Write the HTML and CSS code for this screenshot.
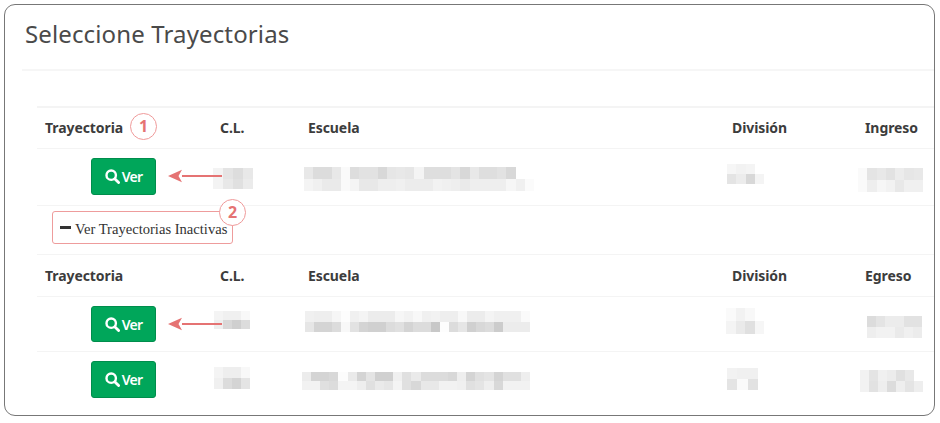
FILE: index.html
```html
<!DOCTYPE html>
<html lang="es">
<head>
<meta charset="utf-8">
<title>Seleccione Trayectorias</title>
<link rel="stylesheet" href="styles.css">
</head>
<body>
<svg class="defs" width="0" height="0" aria-hidden="true">
  <symbol id="lupa" viewBox="0 0 15 15"><circle cx="6.2" cy="6.2" r="4.7" fill="none" stroke="#fff" stroke-width="2.4"/><path d="M9.7 9.7 13.6 13.6" stroke="#fff" stroke-width="2.8" stroke-linecap="round"/></symbol>
  <symbol id="flecha" viewBox="0 0 56 14"><path d="M15 7H55" stroke="#e57373" stroke-width="2"/><path d="M1 7 15 .8 11.5 7 15 13.2Z" fill="#e57373"/></symbol>
</svg>
<main class="frame">
  <h1 class="title">Seleccione Trayectorias</h1>
  <table class="tray">
    <colgroup><col class="c1"><col class="c2"><col class="c3"><col class="c4"><col class="c5"></colgroup>
    <tr class="head first"><th>Trayectoria</th><th>C.L.</th><th>Escuela</th><th>División</th><th>Ingreso</th></tr>
    <tr class="r1">
      <td class="act"><a class="btn"><svg class="ico"><use href="#lupa"/></svg>Ver</a></td>
      <td class="blur"><svg class="m" viewBox="212 149 88 56"><svg x="213" y="168" width="40" height="21" viewBox="0 0 4 2" preserveAspectRatio="none"><rect x="0" y="0" fill="#f3f3f3"/><rect x="1" y="0" fill="#e4e4e4"/><rect x="2" y="0" fill="#ddd"/><rect x="3" y="0" fill="#e8e8e8"/><rect x="0" y="1" fill="#f3f3f3"/><rect x="1" y="1" fill="#e8e8e8"/><rect x="2" y="1" fill="#e0e0e0"/><rect x="3" y="1" fill="#ebebeb"/></svg></svg></td>
      <td class="blur"><svg class="m" viewBox="300 149 424 56"><svg x="304" y="167" width="230" height="24" viewBox="0 0 25 2" preserveAspectRatio="none"><rect x="0" y="0" fill="#e8e8e8"/><rect x="1" y="0" fill="#dcdcdc"/><rect x="2" y="0" fill="#dcdcdc"/><rect x="3" y="0" fill="#e8e8e8"/><rect x="4" y="0" fill="#fafafa"/><rect x="5" y="0" fill="#ddd"/><rect x="6" y="0" fill="#e2e2e2"/><rect x="7" y="0" fill="#e2e2e2"/><rect x="8" y="0" fill="#d8d8d8"/><rect x="9" y="0" fill="#e6e6e6"/><rect x="10" y="0" fill="#e8e8e8"/><rect x="11" y="0" fill="#e6e6e6"/><rect x="12" y="0" fill="#f4f4f4"/><rect x="13" y="0" fill="#dedede"/><rect x="14" y="0" fill="#dedede"/><rect x="15" y="0" fill="#dedede"/><rect x="16" y="0" fill="#e4e4e4"/><rect x="17" y="0" fill="#d8d8d8"/><rect x="18" y="0" fill="#e8e8e8"/><rect x="19" y="0" fill="#dedede"/><rect x="20" y="0" fill="#dedede"/><rect x="21" y="0" fill="#e2e2e2"/><rect x="22" y="0" fill="#d8d8d8"/><rect x="0" y="1" fill="#f4f4f4"/><rect x="1" y="1" fill="#f0f0f0"/><rect x="2" y="1" fill="#eaeaea"/><rect x="3" y="1" fill="#eaeaea"/><rect x="4" y="1" fill="#fafafa"/><rect x="5" y="1" fill="#f4f4f4"/><rect x="6" y="1" fill="#e8e8e8"/><rect x="7" y="1" fill="#e8e8e8"/><rect x="8" y="1" fill="#eee"/><rect x="9" y="1" fill="#eee"/><rect x="10" y="1" fill="#f0f0f0"/><rect x="11" y="1" fill="#ececec"/><rect x="12" y="1" fill="#ececec"/><rect x="13" y="1" fill="#ececec"/><rect x="14" y="1" fill="#f2f2f2"/><rect x="15" y="1" fill="#f0f0f0"/><rect x="16" y="1" fill="#eee"/><rect x="17" y="1" fill="#eaeaea"/><rect x="18" y="1" fill="#eee"/><rect x="19" y="1" fill="#eee"/><rect x="20" y="1" fill="#eee"/><rect x="21" y="1" fill="#eee"/><rect x="22" y="1" fill="#f6f6f6"/><rect x="23" y="1" fill="#f0f0f0"/><rect x="24" y="1" fill="#fbfbfb"/></svg></svg></td>
      <td class="blur"><svg class="m" viewBox="724 149 133 56"><svg x="727" y="164" width="37" height="20" viewBox="0 0 4 2" preserveAspectRatio="none"><rect x="0" y="0" fill="#f6f6f6"/><rect x="1" y="0" fill="#f2f2f2"/><rect x="2" y="0" fill="#f4f4f4"/><rect x="0" y="1" fill="#e4e4e4"/><rect x="1" y="1" fill="#ececec"/><rect x="2" y="1" fill="#d8d8d8"/><rect x="3" y="1" fill="#f4f4f4"/></svg></svg></td>
      <td class="blur"><svg class="m" viewBox="857 149 77 56"><svg x="858" y="168" width="65" height="24" viewBox="0 0 7 2" preserveAspectRatio="none"><rect x="0" y="0" fill="#fafafa"/><rect x="1" y="0" fill="#e4e4e4"/><rect x="2" y="0" fill="#e8e8e8"/><rect x="3" y="0" fill="#e2e2e2"/><rect x="4" y="0" fill="#ececec"/><rect x="5" y="0" fill="#e6e6e6"/><rect x="6" y="0" fill="#e8e8e8"/><rect x="0" y="1" fill="#fafafa"/><rect x="1" y="1" fill="#eee"/><rect x="2" y="1" fill="#f6f6f6"/><rect x="3" y="1" fill="#f2f2f2"/><rect x="4" y="1" fill="#e8e8e8"/><rect x="5" y="1" fill="#f0f0f0"/><rect x="6" y="1" fill="#f0f0f0"/></svg></svg></td>
    </tr>
    <tr>
      <td class="toggle-cell" colspan="5"><span class="toggle"><i class="minus"></i>Ver Trayectorias Inactivas</span></td>
    </tr>
    <tr class="head"><th>Trayectoria</th><th>C.L.</th><th>Escuela</th><th>División</th><th>Egreso</th></tr>
    <tr class="r2">
      <td class="act"><a class="btn"><svg class="ico"><use href="#lupa"/></svg>Ver</a></td>
      <td class="blur"><svg class="m" viewBox="212 297 88 54"><svg x="214" y="311" width="36" height="18" viewBox="0 0 4 2" preserveAspectRatio="none"><rect x="0" y="0" fill="#f4f4f4"/><rect x="1" y="0" fill="#f0f0f0"/><rect x="2" y="0" fill="#f0f0f0"/><rect x="3" y="0" fill="#f8f8f8"/><rect x="0" y="1" fill="#eee"/><rect x="1" y="1" fill="#d8d8d8"/><rect x="2" y="1" fill="#cfcfcf"/><rect x="3" y="1" fill="#dcdcdc"/></svg></svg></td>
      <td class="blur"><svg class="m" viewBox="300 297 424 54"><svg x="305" y="311" width="225" height="21" viewBox="0 0 25 2" preserveAspectRatio="none"><rect x="0" y="0" fill="#f0f0f0"/><rect x="1" y="0" fill="#eee"/><rect x="2" y="0" fill="#eee"/><rect x="3" y="0" fill="#f6f6f6"/><rect x="4" y="0" fill="#fdfdfd"/><rect x="5" y="0" fill="#f0f0f0"/><rect x="6" y="0" fill="#f4f4f4"/><rect x="7" y="0" fill="#ececec"/><rect x="8" y="0" fill="#ececec"/><rect x="9" y="0" fill="#ececec"/><rect x="10" y="0" fill="#f6f6f6"/><rect x="11" y="0" fill="#f2f2f2"/><rect x="12" y="0" fill="#f8f8f8"/><rect x="13" y="0" fill="#f0f0f0"/><rect x="14" y="0" fill="#f2f2f2"/><rect x="15" y="0" fill="#eee"/><rect x="16" y="0" fill="#eee"/><rect x="17" y="0" fill="#f8f8f8"/><rect x="18" y="0" fill="#ececec"/><rect x="19" y="0" fill="#ececec"/><rect x="20" y="0" fill="#f4f4f4"/><rect x="21" y="0" fill="#f0f0f0"/><rect x="22" y="0" fill="#f0f0f0"/><rect x="23" y="0" fill="#f0f0f0"/><rect x="24" y="0" fill="#fafafa"/><rect x="0" y="1" fill="#e6e6e6"/><rect x="1" y="1" fill="#d4d4d4"/><rect x="2" y="1" fill="#d4d4d4"/><rect x="3" y="1" fill="#dcdcdc"/><rect x="4" y="1" fill="#f8f8f8"/><rect x="5" y="1" fill="#e2e2e2"/><rect x="6" y="1" fill="#d4d4d4"/><rect x="7" y="1" fill="#d0d0d0"/><rect x="8" y="1" fill="#d0d0d0"/><rect x="9" y="1" fill="#dcdcdc"/><rect x="10" y="1" fill="#e0e0e0"/><rect x="11" y="1" fill="#d4d4d4"/><rect x="12" y="1" fill="#dcdcdc"/><rect x="13" y="1" fill="#dcdcdc"/><rect x="14" y="1" fill="#c8c8c8"/><rect x="15" y="1" fill="#fdfdfd"/><rect x="16" y="1" fill="#dcdcdc"/><rect x="17" y="1" fill="#e6e6e6"/><rect x="18" y="1" fill="#d0d0d0"/><rect x="19" y="1" fill="#d8d8d8"/><rect x="20" y="1" fill="#dcdcdc"/><rect x="21" y="1" fill="#ccc"/><rect x="22" y="1" fill="#ececec"/><rect x="23" y="1" fill="#ececec"/><rect x="24" y="1" fill="#ececec"/></svg></svg></td>
      <td class="blur"><svg class="m" viewBox="724 297 133 54"><svg x="726" y="308" width="38" height="26" viewBox="0 0 4 2" preserveAspectRatio="none"><rect x="0" y="0" fill="#fafafa"/><rect x="1" y="0" fill="#f2f2f2"/><rect x="2" y="0" fill="#f8f8f8"/><rect x="0" y="1" fill="#f4f4f4"/><rect x="1" y="1" fill="#eaeaea"/><rect x="2" y="1" fill="#e0e0e0"/><rect x="3" y="1" fill="#f6f6f6"/></svg></svg></td>
      <td class="blur"><svg class="m" viewBox="857 297 77 54"><svg x="867" y="316" width="55" height="22" viewBox="0 0 6 2" preserveAspectRatio="none"><rect x="0" y="0" fill="#dcdcdc"/><rect x="1" y="0" fill="#e4e4e4"/><rect x="2" y="0" fill="#ececec"/><rect x="3" y="0" fill="#ececec"/><rect x="4" y="0" fill="#e2e2e2"/><rect x="5" y="0" fill="#e2e2e2"/><rect x="0" y="1" fill="#eee"/><rect x="1" y="1" fill="#f2f2f2"/><rect x="2" y="1" fill="#f2f2f2"/><rect x="3" y="1" fill="#eaeaea"/><rect x="4" y="1" fill="#f0f0f0"/><rect x="5" y="1" fill="#ececec"/></svg></svg></td>
    </tr>
    <tr class="r3">
      <td class="act"><a class="btn"><svg class="ico"><use href="#lupa"/></svg>Ver</a></td>
      <td class="blur"><svg class="m" viewBox="212 352 88 55"><svg x="214" y="367" width="36" height="22" viewBox="0 0 4 2" preserveAspectRatio="none"><rect x="0" y="0" fill="#f4f4f4"/><rect x="1" y="0" fill="#eee"/><rect x="2" y="0" fill="#eee"/><rect x="3" y="0" fill="#f8f8f8"/><rect x="0" y="1" fill="#f0f0f0"/><rect x="1" y="1" fill="#dcdcdc"/><rect x="2" y="1" fill="#d4d4d4"/><rect x="3" y="1" fill="#e4e4e4"/></svg></svg></td>
      <td class="blur"><svg class="m" viewBox="300 352 424 55"><svg x="302" y="372" width="228" height="18" viewBox="0 0 25 2" preserveAspectRatio="none"><rect x="0" y="0" fill="#ececec"/><rect x="1" y="0" fill="#d4d4d4"/><rect x="2" y="0" fill="#d4d4d4"/><rect x="3" y="0" fill="#d8d8d8"/><rect x="4" y="0" fill="#fcfcfc"/><rect x="5" y="0" fill="#eaeaea"/><rect x="6" y="0" fill="#d4d4d4"/><rect x="7" y="0" fill="#e4e4e4"/><rect x="8" y="0" fill="#d0d0d0"/><rect x="9" y="0" fill="#d0d0d0"/><rect x="10" y="0" fill="#f0f0f0"/><rect x="11" y="0" fill="#e0e0e0"/><rect x="12" y="0" fill="#eaeaea"/><rect x="13" y="0" fill="#dcdcdc"/><rect x="14" y="0" fill="#dcdcdc"/><rect x="15" y="0" fill="#dcdcdc"/><rect x="16" y="0" fill="#d8d8d8"/><rect x="17" y="0" fill="#eee"/><rect x="18" y="0" fill="#d4d4d4"/><rect x="19" y="0" fill="#e0e0e0"/><rect x="20" y="0" fill="#e4e4e4"/><rect x="21" y="0" fill="#d4d4d4"/><rect x="22" y="0" fill="#e0e0e0"/><rect x="23" y="0" fill="#e0e0e0"/><rect x="24" y="0" fill="#eee"/><rect x="0" y="1" fill="#f2f2f2"/><rect x="1" y="1" fill="#f2f2f2"/><rect x="2" y="1" fill="#e0e0e0"/><rect x="3" y="1" fill="#dcdcdc"/><rect x="4" y="1" fill="#f4f4f4"/><rect x="5" y="1" fill="#f4f4f4"/><rect x="6" y="1" fill="#eee"/><rect x="7" y="1" fill="#e0e0e0"/><rect x="8" y="1" fill="#eaeaea"/><rect x="9" y="1" fill="#e6e6e6"/><rect x="10" y="1" fill="#f4f4f4"/><rect x="11" y="1" fill="#e0e0e0"/><rect x="12" y="1" fill="#d8d8d8"/><rect x="13" y="1" fill="#e8e8e8"/><rect x="14" y="1" fill="#e8e8e8"/><rect x="15" y="1" fill="#f2f2f2"/><rect x="16" y="1" fill="#f2f2f2"/><rect x="17" y="1" fill="#f0f0f0"/><rect x="18" y="1" fill="#e0e0e0"/><rect x="19" y="1" fill="#e4e4e4"/><rect x="20" y="1" fill="#eee"/><rect x="21" y="1" fill="#d8d8d8"/><rect x="22" y="1" fill="#f2f2f2"/><rect x="23" y="1" fill="#f2f2f2"/><rect x="24" y="1" fill="#f2f2f2"/></svg></svg></td>
      <td class="blur"><svg class="m" viewBox="724 352 133 55"><svg x="727" y="368" width="31" height="22" viewBox="0 0 3 2" preserveAspectRatio="none"><rect x="0" y="0" fill="#f2f2f2"/><rect x="1" y="0" fill="#f0f0f0"/><rect x="2" y="0" fill="#f0f0f0"/><rect x="0" y="1" fill="#e4e4e4"/><rect x="1" y="1" fill="#fafafa"/><rect x="2" y="1" fill="#e2e2e2"/></svg></svg></td>
      <td class="blur"><svg class="m" viewBox="857 352 77 55"><svg x="860" y="370" width="63" height="22" viewBox="0 0 7 2" preserveAspectRatio="none"><rect x="0" y="0" fill="#f2f2f2"/><rect x="1" y="0" fill="#e4e4e4"/><rect x="2" y="0" fill="#f0f0f0"/><rect x="3" y="0" fill="#ececec"/><rect x="4" y="0" fill="#e0e0e0"/><rect x="5" y="0" fill="#e8e8e8"/><rect x="0" y="1" fill="#f2f2f2"/><rect x="1" y="1" fill="#e2e2e2"/><rect x="2" y="1" fill="#eee"/><rect x="3" y="1" fill="#dcdcdc"/><rect x="4" y="1" fill="#eee"/><rect x="5" y="1" fill="#e4e4e4"/><rect x="6" y="1" fill="#eee"/></svg></svg></td>
    </tr>
  </table>
  <span class="badge b1">1</span>
  <span class="badge b2">2</span>
  <svg class="arrow a1"><use href="#flecha"/></svg>
  <svg class="arrow a2"><use href="#flecha"/></svg>
</main>
</body>
</html>
```
FILE: styles.css
```css
* { box-sizing: border-box; }
html, body { margin: 0; padding: 0; background: #fff; }
body { width: 940px; height: 423px; overflow: hidden; font-family: "Noto Sans", "Open Sans", sans-serif; color: #333; }
.defs { position: absolute; }
.frame {
  position: relative;
  width: 931px;
  height: 412px;
  margin: 4px 0 0 4px;
  padding-left: 17px;
  border: 1px solid #777;
  border-radius: 11px;
  background: #fff;
  overflow: hidden;
}
.title {
  margin: 0 0 35px;
  height: 66px;
  padding: 12px 0 0 3px;
  border-bottom: 2px solid #f6f6f6;
  font-size: 24px;
  line-height: 34px;
  font-weight: 400;
  letter-spacing: .13px;
  color: #4a4a4a;
}
.tray {
  margin-left: 15px;
  width: 897px;
  table-layout: fixed;
  border-collapse: separate;
  border-spacing: 0;
}
.c1 { width: 175px; }
.c2 { width: 88px; }
.c3 { width: 424px; }
.c4 { width: 133px; }
.c5 { width: 77px; }
.tray th, .tray td { padding: 0; }
.head th {
  height: 42px;
  padding: 0 8px 1px;
  border-bottom: 1px solid #f4f4f4;
  text-align: left;
  font-size: 14px;
  font-weight: 700;
  letter-spacing: -.08px;
  color: #3c3c3c;
}
.head.first th { height: 43px; padding-bottom: 1px; border-top: 2px solid #f4f4f4; }
.r1 td, .r2 td, .toggle-cell { border-bottom: 1px solid #f4f4f4; }
.r1 td { height: 57px; }
.r2 td { height: 55px; }
.r3 td { height: 55px; }
.tray .act { padding: 9px 2px 0 0; text-align: center; vertical-align: top; }
.btn {
  display: inline-flex;
  align-items: center;
  justify-content: center;
  gap: 2px;
  width: 65px;
  height: 37px;
  border: 1px solid #008d4c;
  border-radius: 3px;
  background: #00a65a;
  color: #fff;
  font-size: 14px;
  font-weight: 600;
  letter-spacing: -.7px;
}
.r2 .btn { height: 36px; }
.ico { width: 15px; height: 15px; }
.blur { vertical-align: top; }
.m { display: block; width: 100%; height: 100%; filter: blur(.5px); }
.m rect { width: 1px; height: 1px; shape-rendering: crispEdges; }
.tray .toggle-cell { height: 49px; padding: 5px 0 0 15px; vertical-align: top; }
.toggle {
  display: inline-flex;
  align-items: center;
  width: 181px;
  height: 33px;
  padding: 3px 0 0 7px;
  border: 1px solid #ee9c9c;
  border-radius: 3px;
  font-family: "Liberation Serif", serif;
  font-size: 14.6px;
  color: #333;
  white-space: nowrap;
}
.minus { width: 11px; height: 3px; margin: 0 4px 3px 0; background: #333; }
.badge {
  position: absolute;
  width: 27px;
  height: 27px;
  border: 1.3px solid #ef9a9a;
  border-radius: 50%;
  background: #fff;
  color: #e57373;
  font-size: 16px;
  font-weight: 700;
  line-height: 24px;
  text-align: center;
}
.b1 { left: 125px; top: 108px; }
.b2 { left: 214px; top: 194px; }
.arrow { position: absolute; left: 162px; width: 56px; height: 14px; }
.a1 { top: 164px; }
.a2 { top: 312px; }
```
